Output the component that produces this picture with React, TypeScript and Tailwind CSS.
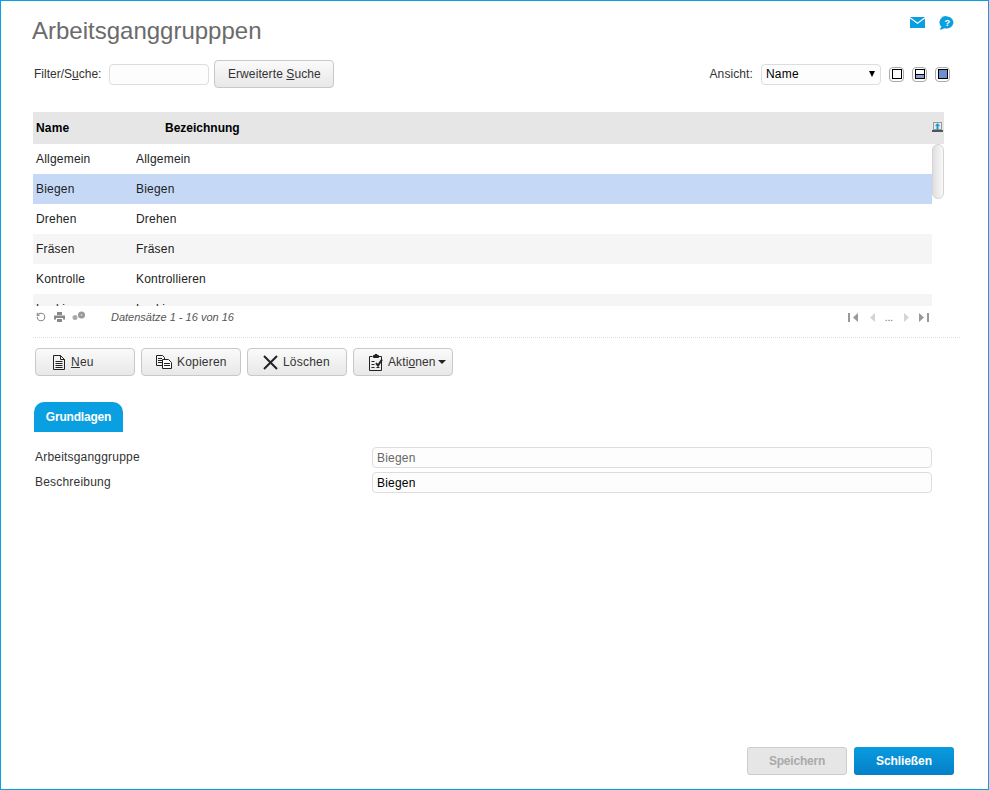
import { RotateCcw } from "lucide-react"

const rows = [
  { name: "Allgemein", label: "Allgemein", bg: "bg-white" },
  { name: "Biegen", label: "Biegen", bg: "bg-[#c5d9f7]" },
  { name: "Drehen", label: "Drehen", bg: "bg-white" },
  { name: "Fräsen", label: "Fräsen", bg: "bg-[#f5f5f5]" },
  { name: "Kontrolle", label: "Kontrollieren", bg: "bg-white" },
  { name: "Lackieren", label: "Lackieren", bg: "bg-[#f5f5f5]" },
]

const btn =
  "flex h-[28px] w-[100px] items-center rounded-[4px] border border-[#c8c8c8] bg-gradient-to-b from-[#fafafa] to-[#e8e8e8] text-[12px] tracking-[0.2px] text-[#333]"

function ViewIcon({ fill }: { fill: "none" | "half" | "full" }) {
  return (
    <span className="flex h-[15px] w-[15px] items-center justify-center rounded-[4px] border border-[#aaa] bg-white">
      <span className="flex h-[10px] w-[10px] flex-col justify-end border border-black bg-white">
        {fill === "half" && <span className="h-[4px] border-t border-black bg-[#8aa0d0]" />}
        {fill === "full" && <span className="h-full bg-[#6d8fce]" />}
      </span>
    </span>
  )
}

function DocIcon() {
  return (
    <svg width="12" height="15" viewBox="0 0 12 15" fill="none" stroke="#222" strokeWidth="1">
      <path d="M.5.500h7l4 4v10h-11z" />
      <path d="M7.500.500v4h4M2.500 6.500h7M2.500 8.500h7M2.500 10.500h7M2.500 12.500h7" />
    </svg>
  )
}

function CopyIcon() {
  return (
    <svg width="16" height="14" viewBox="0 0 16 14" fill="none" stroke="#222" strokeWidth="1">
      <path d="M.5.500h6l2 2v8h-8z" />
      <path d="M2 3.500h4M2 5.500h4M2 7.500h4" />
      <path d="M6.500 4.500h6l3 3v6h-9z" fill="#fff" />
      <path d="M8 8.500h6M8 10.500h6" />
    </svg>
  )
}

function CrossIcon() {
  return (
    <svg width="15" height="15" viewBox="0 0 15 15" fill="none" stroke="#222" strokeWidth="2">
      <path d="M1 1l13 13M14 1L1 14" />
    </svg>
  )
}

function ActionsIcon() {
  return (
    <svg width="16" height="17" viewBox="0 0 16 17" fill="none" stroke="#222" strokeWidth="1">
      <path d="M4.500 2.500h-3v14h12v-14h-3" />
      <path d="M5.500 3.500v-2h1.500v-1h2v1h1.500v2z" fill="#222" />
      <path d="M3.500 7.500h3M3.500 10.500h3M3.500 13.500h3" />
      <path d="M8 9l2 2.500 4-6" stroke="#222" strokeWidth="2" />
      <path d="M8.500 13.500h3" />
    </svg>
  )
}

function GridHeadIcon() {
  return (
    <svg width="11" height="10" viewBox="0 0 11 10">
      <path d="M1 0h9v8H1z" fill="#9a9a9a" />
      <path d="M2 1h7v6H2z" fill="#e8e8e8" />
      <path d="M0 8h11v2H0z" fill="#555" />
      <path d="M5.500 1l2.500 3H6.500v4h-2V4H3z" fill="#0a9fe0" />
    </svg>
  )
}

function PrintIcon() {
  return (
    <svg width="11" height="10" viewBox="0 0 11 10" fill="#888">
      <path d="M3 0h5v3H3z" />
      <path d="M0 3.500h11v4H9V6H2v1.500H0z" />
      <path d="M3 7h5v3H3z" />
    </svg>
  )
}

function GearsIcon() {
  return (
    <svg width="14" height="10" viewBox="0 0 14 10" fill="#999">
      <circle cx="3" cy="6.500" r="2.500" fill="#aaa" />
      <circle cx="9.500" cy="4" r="3.500" />
      <circle cx="9.500" cy="4" r="1" fill="#ccc" />
    </svg>
  )
}

function PagerIcon({ dir, bar, color }: { dir: "left" | "right"; bar?: boolean; color: string }) {
  const w = bar ? 10 : 5
  return (
    <svg width={w} height="9" viewBox={`0 0 ${w} 9`} fill={color}>
      {dir === "left" && bar && <path d="M0 0h2v9H0z" />}
      {dir === "left" && <path d={`M${w} 0v9L${w - 5} 4.500z`} />}
      {dir === "right" && <path d="M0 0v9l5-4.500z" />}
      {dir === "right" && bar && <path d="M8 0h2v9H8z" />}
    </svg>
  )
}

export default function App() {
  return (
    <div className="flex h-[790px] w-[989px] flex-col border border-[#0a9fe0] bg-white font-['Liberation_Sans',Arial,sans-serif] text-[12px] text-[#333]">
      <div className="flex h-[59px] justify-between pl-[31px] pr-[34px]">
        <h1 className="pt-[16px] text-[24px] leading-[28px] text-[#6b6b6b]">Arbeitsganggrupppen</h1>
        <div className="flex gap-[14px] pt-[15px]">
          <svg width="15" height="11" viewBox="0 0 15 11" className="mt-[1px]">
            <path d="M0 0h15L7.500 5.500z" fill="#0a9fe0" />
            <path d="M0 1.500l7.500 5.500L15 1.500V11H0z" fill="#0a9fe0" />
          </svg>
          <svg width="15" height="14" viewBox="0 0 16 14">
            <path d="M9 0a7 6.500 0 1 1-3 12.600c-1.500.8-3.500 1.400-5.500 1.400 1-.9 1.800-2 2-3.200A6.500 6.500 0 0 1 9 0z" fill="#0a9fe0" />
            <text x="9" y="10.500" textAnchor="middle" fontSize="10" fontWeight="700" fill="#fff">?</text>
          </svg>
        </div>
      </div>

      <div className="flex h-[28px] items-center pl-[33px] pr-[38px]">
        <span>
          Filter/S<u>u</u>che:
        </span>
        <input className="ml-[8px] h-[21px] w-[100px] rounded-[4px] border border-[#ddd] bg-[#fdfdfd]" />
        <button className="ml-[5px] h-[28px] w-[120px] rounded-[4px] border border-[#c8c8c8] bg-gradient-to-b from-[#fafafa] to-[#e8e8e8] text-[12px] tracking-[0.1px] text-[#333]">
          Erweiterte <u>S</u>uche
        </button>
        <span className="ml-auto tracking-[0.1px]">Ansicht:</span>
        <div className="ml-[8px] flex h-[21px] w-[120px] items-center justify-between rounded-[4px] border border-[#ddd] bg-[#fdfdfd] pl-[4px] pr-[5px] tracking-[0.2px] text-black">
          <span>Name</span>
          <span className="h-0 w-0 border-x-[3.500px] border-t-[6px] border-x-transparent border-t-black" />
        </div>
        <div className="ml-[8px] flex gap-[8px]">
          <ViewIcon fill="none" />
          <ViewIcon fill="half" />
          <ViewIcon fill="full" />
        </div>
      </div>

      <div className="ml-[32px] mt-[24px] w-[911px]">
        <div className="flex h-[32px] items-center bg-[#e6e6e6] font-bold text-black">
          <span className="w-[132px] pl-[3px] tracking-[0.2px]">Name</span>
          <span>Bezeichnung</span>
          <span className="ml-auto mb-[3px] mr-[1px] flex">
            <GridHeadIcon />
          </span>
        </div>
        <div className="flex h-[162px] overflow-hidden">
          <div className="w-[899px]">
            {rows.map((r) => (
              <div key={r.name} className={`flex h-[30px] items-center tracking-[0.2px] text-[#222] ${r.bg}`}>
                <span className="w-[103px] pl-[3px]">{r.name}</span>
                <span>{r.label}</span>
              </div>
            ))}
          </div>
          <div className="h-[55px] w-[12px] rounded-[6px] border border-[#d4d4d4] bg-gradient-to-r from-[#e0e0e0] to-[#f8f8f8]" />
        </div>
        <div className="flex h-[22px] items-center pl-[3px] pr-[15px] text-[#888]">
          <RotateCcw size={10} strokeWidth={2.5} />
          <span className="ml-[8px] flex">
            <PrintIcon />
          </span>
          <span className="ml-[7px] mb-[2px] flex">
            <GearsIcon />
          </span>
          <span className="ml-[25px] text-[11px] italic text-[#555]">Datensätze 1 - 16 von 16</span>
          <div className="ml-auto flex items-center text-[10px] text-[#666]">
            <PagerIcon dir="left" bar color="#999" />
            <span className="ml-[12px] flex">
              <PagerIcon dir="left" color="#d4d4d4" />
            </span>
            <span className="ml-[10px]">...</span>
            <span className="ml-[11px] flex">
              <PagerIcon dir="right" color="#d4d4d4" />
            </span>
            <span className="ml-[10px] flex">
              <PagerIcon dir="right" bar color="#999" />
            </span>
          </div>
        </div>
      </div>

      <div className="ml-[32px] mr-[28px] mt-[9px] border-t border-dotted border-[#ddd]" />

      <div className="ml-[34px] mt-[10px] flex gap-[6px]">
        <button className={`${btn} pl-[17px]`}>
          <DocIcon />
          <span className="ml-[6px]">
            <u>N</u>eu
          </span>
        </button>
        <button className={`${btn} pl-[14px]`}>
          <CopyIcon />
          <span className="ml-[5px]">Kopieren</span>
        </button>
        <button className={`${btn} pl-[15px]`}>
          <CrossIcon />
          <span className="ml-[5px]">Löschen</span>
        </button>
        <button className={`${btn} pl-[14px]`}>
          <ActionsIcon />
          <span className="ml-[4px] tracking-[0.1px]">
            Akti<u>o</u>nen
          </span>
          <span className="ml-[2px] h-0 w-0 border-x-[4px] border-t-[4px] border-x-transparent border-t-[#222]" />
        </button>
      </div>

      <div className="ml-[33px] mt-[26px] flex h-[30px] w-[89px] items-center justify-center rounded-t-[10px] bg-[#0a9fe0] font-bold tracking-[-0.2px] text-white">
        Grundlagen
      </div>

      <div className="ml-[34px] mt-[15px] flex w-[897px] flex-col gap-[4px] tracking-[0.2px]">
        <div className="flex h-[21px] justify-between">
          <span className="pt-[1px]">Arbeitsganggruppe</span>
          <div className="flex h-[21px] w-[560px] items-center rounded-[4px] border border-[#ddd] bg-[#fdfdfd] pl-[4px] text-[#666]">
            Biegen
          </div>
        </div>
        <div className="flex h-[21px] justify-between">
          <span className="pt-[1px]">Beschreibung</span>
          <div className="flex h-[21px] w-[560px] items-center rounded-[4px] border border-[#ddd] bg-[#fdfdfd] pl-[4px] text-black">
            Biegen
          </div>
        </div>
      </div>

      <div className="mt-auto mb-[14px] mr-[34px] flex justify-end gap-[7px]">
        <button className="h-[28px] w-[100px] rounded-[3px] border border-[#ccc] bg-[#e6e6e6] text-[12px] font-bold tracking-[-0.2px] text-[#aaa]">
          Speichern
        </button>
        <button className="h-[28px] w-[100px] rounded-[3px] bg-gradient-to-b from-[#0a9be0] to-[#0580c8] text-[12px] font-bold tracking-[-0.1px] text-white">
          Schließen
        </button>
      </div>
    </div>
  )
}
